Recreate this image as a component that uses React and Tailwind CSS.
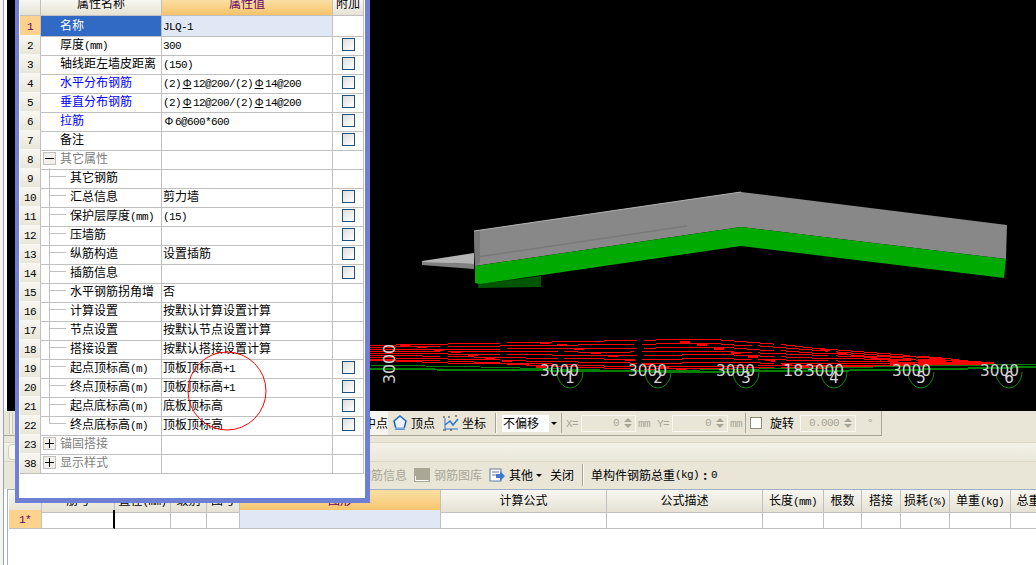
const cjk = "font-['Noto_Sans_CJK_SC',sans-serif]";

// SimSun look: latin runs are half the width of a hanzi
function T({ text }) {
  return text.split(/(Φ_?|[\x00-\x7f]+)/).filter(Boolean).map((part, i) => {
    if (part[0] === 'Φ') {
      return (
        <span key={i} className={`inline-block w-3 text-center font-['Liberation_Sans'] text-[11px] ${part.length > 1 ? 'underline' : ''}`}>
          Φ
        </span>
      );
    }
    if (/^[\x00-\x7f]+$/.test(part)) {
      return <span key={i} className="font-['Liberation_Mono',monospace] text-[11px] tracking-[-0.6px] whitespace-pre">{part}</span>;
    }
    return <span key={i}>{part}</span>;
  });
}

const rows = [
  { n: 1, name: '名称', value: 'JLQ-1', active: true },
  { n: 2, name: '厚度(mm)', value: '300', check: true },
  { n: 3, name: '轴线距左墙皮距离', value: '(150)', check: true },
  { n: 4, name: '水平分布钢筋', value: '(2)Φ_12@200/(2)Φ_14@200', check: true, blue: true },
  { n: 5, name: '垂直分布钢筋', value: '(2)Φ_12@200/(2)Φ_14@200', check: true, blue: true },
  { n: 6, name: '拉筋', value: 'Φ6@600*600', check: true, blue: true },
  { n: 7, name: '备注', check: true },
  { n: 8, name: '其它属性', group: '-' },
  { n: 9, name: '其它钢筋', tree: true },
  { n: 10, name: '汇总信息', value: '剪力墙', tree: true, check: true },
  { n: 11, name: '保护层厚度(mm)', value: '(15)', tree: true, check: true },
  { n: 12, name: '压墙筋', tree: true, check: true },
  { n: 13, name: '纵筋构造', value: '设置插筋', tree: true, check: true },
  { n: 14, name: '插筋信息', tree: true, check: true },
  { n: 15, name: '水平钢筋拐角增', value: '否', tree: true },
  { n: 16, name: '计算设置', value: '按默认计算设置计算', tree: true },
  { n: 17, name: '节点设置', value: '按默认节点设置计算', tree: true },
  { n: 18, name: '搭接设置', value: '按默认搭接设置计算', tree: true },
  { n: 19, name: '起点顶标高(m)', value: '顶板顶标高+1', tree: true, check: true },
  { n: 20, name: '终点顶标高(m)', value: '顶板顶标高+1', tree: true, check: true },
  { n: 21, name: '起点底标高(m)', value: '底板顶标高', tree: true, check: true },
  { n: 22, name: '终点底标高(m)', value: '顶板顶标高', tree: true, check: true, last: true },
  { n: 23, name: '锚固搭接', group: '+' },
  { n: 38, name: '显示样式', group: '+' },
];

const headCell = 'bg-gradient-to-b from-[#f8f7f1] to-[#e5e2d4] border-r border-b border-[#c0c0c0] text-center';
const orangeCell = 'bg-gradient-to-b from-[#fbdfa3] to-[#f5c369] border-r border-b border-[#c0c0c0] text-center text-[#660066]';

function PropRow({ row }) {
  const { n, name, value, active, check, blue, group, tree, last } = row;
  const nameColor = active ? 'bg-[#316ac5] text-white' : blue ? 'text-[#0000ff]' : group ? 'text-[#808080]' : 'text-black';
  return (
    <div className="grid grid-cols-[21px_121px_171px_31px] h-[19px] leading-[18px]">
      <div className={`border-r border-b border-[#c0c0c0] text-center ${active ? 'bg-[#fdd28c] text-[#660066]' : 'bg-gradient-to-b from-[#f8f7f1] to-[#e8e5d8]'}`}>
        <T text={String(n)} />
      </div>
      <div className={`relative border-r border-b border-[#c0c0c0] whitespace-nowrap ${tree ? 'pl-[29px]' : 'pl-[19px]'} ${nameColor}`}>
        {tree && (
          <>
            <div className={`absolute left-2 top-0 w-px bg-[#c0c0c0] ${last ? 'h-[9px]' : 'h-[19px]'}`} />
            <div className="absolute left-2 top-2 h-px w-[17px] bg-[#c0c0c0]" />
          </>
        )}
        {group && (
          <div className="absolute left-[2px] top-[3px] flex h-[13px] w-[13px] items-center justify-center border border-[#c0c0c0] bg-[#f2f0e8]">
            <div className="relative h-[9px] w-[9px]">
              <div className="absolute left-0 top-1 h-px w-[9px] bg-black" />
              {group === '+' && <div className="absolute left-1 top-0 h-[9px] w-px bg-black" />}
            </div>
          </div>
        )}
        <T text={name} />
      </div>
      <div className={`border-r border-b border-[#c0c0c0] pl-px whitespace-nowrap ${active ? 'bg-[#e0e8f5]' : ''}`}>
        {value && <T text={value} />}
      </div>
      <div className="flex items-center justify-center border-r border-b border-[#c0c0c0] pb-px">
        {check && <div className="h-[13px] w-[13px] border border-[#1c5180] bg-gradient-to-br from-[#dfdfd8] to-white" />}
      </div>
    </div>
  );
}

function PropertyPanel() {
  return (
    <div className={`absolute left-[15px] top-0 h-[503px] w-[355px] border-l-4 border-r-[5px] border-b-[5px] border-[#6f80d4] bg-white pl-px text-black ${cjk} text-xs`}>
      <div className="grid grid-cols-[21px_121px_171px_31px] h-4 leading-[6px]">
        <div className={headCell} />
        <div className={headCell}>属性名称</div>
        <div className={orangeCell}>属性值</div>
        <div className={headCell}>附加</div>
      </div>
      {rows.map((row) => <PropRow key={row.n} row={row} />)}
    </div>
  );
}

const redLevels = [0, 0.13, 0.27, 0.4, 0.53, 0.67, 0.8, 0.92, 1];
function redY(x, t) {
  const top = x < 709 ? 345 - ((x - 370) / 339) * 6 : 339 + ((x - 709) / 289) * 24;
  const bottom = x < 640 ? 360 + ((x - 370) / 270) * 9 : 369 - ((x - 640) / 358) * 5;
  return top + (bottom - top) * t;
}

function Scene() {
  const grid = [
    { x: 570, label: '1', dim: 540 },
    { x: 658, label: '2', dim: 628 },
    { x: 746, label: '3', dim: 716 },
    { x: 834, label: '4', dim: 805 },
    { x: 921, label: '5', dim: 892 },
    { x: 1009, label: '6', dim: 980 },
  ];
  return (
    <svg width="1029" height="411" viewBox="7 0 1029 411" className="block bg-black">
      <polygon points="422,261 474,253 474,264 422,263" fill="#b4b4b4" />
      <polygon points="422,262 474,264 474,269 422,265" fill="#808080" />
      <polygon points="478,284 541,276 541,287 478,288" fill="#005500" />
      <polygon points="474,231 741,192 1007,225 1006,259 741,227 475,266" fill="#888888" />
      <polygon points="474,231 480,231 480,262 475,266" fill="#777777" />
      <polyline points="474,231 741,192" fill="none" stroke="#b4b4b4" />
      <polyline points="477,257 687,226" fill="none" stroke="#7a7a7a" strokeWidth="1.5" />
      <polygon points="475,266 741,227 1006,259 1004,278 741,246 480,284 475,283" fill="#00aa00" />

      <g shapeRendering="crispEdges">
        {redLevels.map((t, i) => {
          const pts = [];
          for (let x = 370; x <= 998; x += 26) {
            pts.push(`${x},${Math.round(redY(x, t))}`);
          }
          return <polyline key={i} points={pts.join(' ')} fill="none" stroke="#ff0000" strokeDasharray={i % 2 ? '70 8 110 6' : '130 7'} />;
        })}
        {redLevels.map((t, i) => (
          <polyline
            key={i}
            points={[0, 1, 2, 3, 4, 5, 6].map((k) => `${400 + k * 88 + i * 17},${Math.round(redY(400 + k * 88 + i * 17, t)) + 1}`).join(' ')}
            fill="none"
            stroke="#ff0000"
            strokeWidth="2"
            strokeDasharray="10 130"
          />
        ))}
        <polyline points="370,365 480,367 640,371 820,368 1036,364" fill="none" stroke="#008000" />
        <polyline points="370,369 500,370 700,372 900,370 1036,367" fill="none" stroke="#008000" strokeWidth="2" />
      </g>

      {grid.map((g) => (
        <g key={g.x}>
          <path d={`M${g.x - 13} 372 A13 16 0 0 0 ${g.x + 13} 372`} fill="none" stroke="#0a8a0a" />
          <text x={g.x} y={383} textAnchor="middle" fill="#d8d8d8" fontSize="15" fontFamily="DejaVu Sans">{g.label}</text>
          <text x={g.dim} y={376} fill="#d0d0d0" fontSize="16" fontFamily="DejaVu Sans" textLength="39" lengthAdjust="spacingAndGlyphs">3000</text>
        </g>
      ))}
      <text x="783" y="376" fill="#d0d0d0" fontSize="16" fontFamily="DejaVu Sans">18</text>
      <text x="0" y="0" transform="translate(395 384) rotate(-90)" fill="#d0d0d0" fontSize="16" fontFamily="DejaVu Sans" textLength="40" lengthAdjust="spacingAndGlyphs">3000</text>
    </svg>
  );
}

function Spin() {
  return (
    <div className="flex flex-col gap-[2px]">
      <div className="h-0 w-0 border-x-[4px] border-b-[4px] border-x-transparent border-b-[#a8a596]" />
      <div className="h-0 w-0 border-x-[4px] border-t-[4px] border-x-transparent border-t-[#a8a596]" />
    </div>
  );
}

function NumberInput({ width, value }) {
  return (
    <div className={`flex h-[17px] items-center justify-end gap-[5px] border border-[#f8f7f0] pr-[3px] text-[#a8a596] ${width}`}>
      <T text={value} />
      <Spin />
    </div>
  );
}

function OffsetToolbar() {
  return (
    <div className={`flex h-[25px] w-[878px] items-center border-b border-r border-[#a8a596] pl-[5px] text-xs ${cjk}`}>
      <div className="h-[21px] w-1 border-x border-[#c8c5b6] bg-[#f4f2ea]" />
      <div className="ml-[351px] flex h-6 w-6 items-center bg-[#f6f5ef]">中点</div>
      <svg width="16" height="18" viewBox="0 0 16 18" className="ml-1">
        <polygon points="8,2 14,7 12,15 4,15 2,7" fill="#eef3fb" stroke="#1f62b8" strokeWidth="1.5" />
        <rect x="3" y="13.5" width="10" height="2" fill="#7ba7dd" />
      </svg>
      <span className="ml-[3px]">顶点</span>
      <svg width="17" height="18" viewBox="0 0 17 18" className="ml-[7px]">
        <path d="M3 4V15H16" fill="none" stroke="#2a78d0" />
        <path d="M3 11L8 7L11 11L16 5" fill="none" stroke="#2a78d0" strokeWidth="1.5" />
        <path d="M1 3h2M1 16h3M6 3h2M13 2h2M8 16h2" stroke="#333" />
      </svg>
      <span className="ml-[3px]">坐标</span>
      <div className="ml-[9px] h-5 w-[2px] border-l border-[#a8a596] bg-[#f8f7f0]" />
      <div className="ml-[5px] flex h-[17px] w-[56px] items-center bg-white pl-px">
        <span className="w-[46px]">不偏移</span>
        <div className="flex h-full flex-1 items-center justify-center bg-[#e9e6d8]">
          <div className="h-0 w-0 border-x-[3px] border-t-[3px] border-x-transparent border-t-black" />
        </div>
      </div>
      <div className="ml-[3px] h-5 w-px bg-[#a8a596]" />
      <span className="ml-1 w-[15px] text-[#a8a596]"><T text="X=" /></span>
      <NumberInput width="w-[55px]" value="0" />
      <span className="ml-[2px] w-[19px] text-[#a8a596]"><T text="mm" /></span>
      <span className="w-[15px] text-[#a8a596]"><T text="Y=" /></span>
      <NumberInput width="w-[56px]" value="0" />
      <span className="ml-[2px] w-[15px] text-[#a8a596]"><T text="mm" /></span>
      <div className="h-5 w-px bg-[#a8a596]" />
      <div className="ml-1 h-3 w-3 border border-[#8f8c7c] bg-white" />
      <span className="ml-2">旋转</span>
      <div className="ml-[6px]"><NumberInput width="w-[56px]" value="0.000" /></div>
      <span className="ml-3 text-[#a8a596]">°</span>
    </div>
  );
}

function ItemToolbar() {
  return (
    <div className={`flex h-[26px] items-center pl-[355px] text-xs ${cjk}`}>
      <span className="text-[#a8a596]">钢筋信息</span>
      <svg width="16" height="14" viewBox="0 0 16 14" className="ml-[7px]">
        <rect width="16" height="14" fill="#aaa796" />
        <path d="M1.5 8V12.5H14.5" fill="none" stroke="#fff" />
      </svg>
      <span className="ml-1 text-[#a8a596]">钢筋图库</span>
      <svg width="16" height="14" viewBox="0 0 16 14" className="ml-[7px]">
        <rect x="1" y="1" width="11" height="12" fill="#fff" stroke="#607a9c" />
        <path d="M3 4h7M3 7h4" stroke="#607a9c" />
        <path d="M7 6H11V3L16 8L11 13V10H7Z" fill="#3a78d4" />
      </svg>
      <span className="ml-1">其他</span>
      <div className="ml-[3px] h-0 w-0 border-x-[3px] border-t-[3px] border-x-transparent border-t-black" />
      <span className="ml-2">关闭</span>
      <div className="ml-2 h-[22px] w-[2px] border-l border-[#a8a596] bg-[#f8f7f0]" />
      <span className="ml-[7px] flex items-center whitespace-nowrap">
        <T text="单构件钢筋总重(kg)" />
        <span className="w-3 text-center font-bold">:</span>
        <T text="0" />
      </span>
    </div>
  );
}

const gridCols = 'grid grid-cols-[33px_73px_56px_36px_33px_201px_166px_156px_61px_38px_39px_49px_61px_60px]';
const columns = ['', '筋号', '直径(mm)', '级别', '图号', '图形', '计算公式', '公式描述', '长度(mm)', '根数', '搭接', '损耗(%)', '单重(kg)', '总重(kg)'];

function RebarGrid() {
  return (
    <div className={`ml-[3px] flex-1 overflow-hidden border-l border-t border-[#9fb0c4] pl-px text-xs ${cjk}`}>
      <div className={`${gridCols} h-5 leading-[20px]`}>
        {columns.map((c, i) => (
          <div key={i} className={`whitespace-nowrap ${i === 5 ? orangeCell : headCell}`}>
            <T text={c} />
          </div>
        ))}
      </div>
      <div className={`${gridCols} h-[19px] leading-[16px]`}>
        {columns.map((c, i) => (
          <div
            key={i}
            className={`border-b border-[#c0c0c0] ${i === 1 ? 'border-r-2 border-r-black' : 'border-r'} ${i === 0 ? 'bg-[#fdd28c] text-center text-[#660066]' : ''} ${i === 5 ? 'bg-[#e0e8f5]' : ''}`}
          >
            {i === 0 && <T text="1*" />}
          </div>
        ))}
      </div>
    </div>
  );
}

export default function App() {
  return (
    <div className="relative flex h-[565px] w-[1036px] overflow-hidden bg-white text-black">
      <div className="w-1 shrink-0 border-r border-[#9aa5ae] bg-[#f4f4f0]" />
      <div className="flex min-w-0 flex-1 flex-col">
        <div className="ml-[3px]">
          <Scene />
        </div>
        <div className="h-[78px] bg-[#e9e6d8]">
          <OffsetToolbar />
          <div className="h-[6px]" />
          <div className="flex h-5 items-center border-y border-[#dad7c6] bg-gradient-to-b from-[#f3f1e8] to-[#ebe8db] pl-1">
            <div className="h-4 w-3 rounded-l border border-[#d0cdbc] bg-[#f8f7f0]" />
          </div>
          <ItemToolbar />
        </div>
        <RebarGrid />
      </div>
      <PropertyPanel />
      <svg width="82" height="82" viewBox="0 0 82 82" className="absolute left-[186px] top-[350px]">
        <circle cx="41" cy="41" r="39" fill="none" stroke="#ff0000" />
      </svg>
    </div>
  );
}
